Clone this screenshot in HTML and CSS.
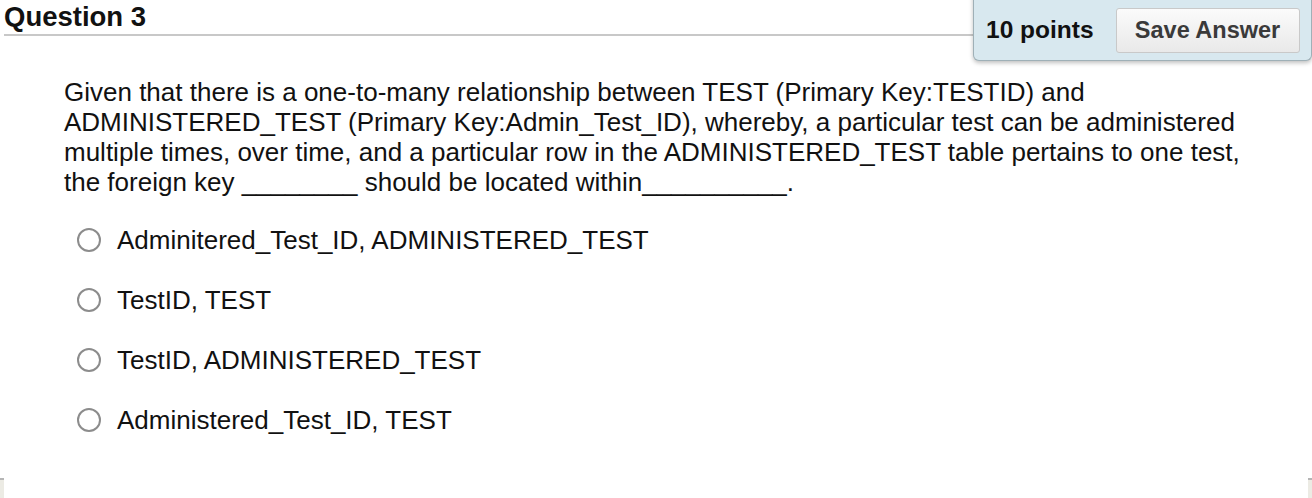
FILE: index.html
```html
<!DOCTYPE html>
<html>
<head>
<meta charset="utf-8">
<link rel="stylesheet" href="styles.css">
</head>
<body>
<div class="page">
  <div class="header">
    <h2 class="title">Question 3</h2>
    <div class="points-box">
      <span class="points">10 points</span>
      <button class="save">Save Answer</button>
    </div>
  </div>
  <div class="question">
    <p class="stem">Given that there is a one-to-many relationship between TEST (Primary Key:TESTID) and<br>ADMINISTERED_TEST (Primary Key:Admin_Test_ID), whereby, a particular test can be administered<br>multiple times, over time, and a particular row in the ADMINISTERED_TEST table pertains to one test,<br>the foreign key ________ should be located within__________.</p>
    <ul class="options">
      <li class="option"><span class="radio"></span><span>Adminitered_Test_ID, ADMINISTERED_TEST</span></li>
      <li class="option"><span class="radio"></span><span>TestID, TEST</span></li>
      <li class="option"><span class="radio"></span><span>TestID, ADMINISTERED_TEST</span></li>
      <li class="option"><span class="radio"></span><span>Administered_Test_ID, TEST</span></li>
    </ul>
  </div>
  <div class="footer">
    <span class="edge left"></span>
    <span class="edge right"></span>
  </div>
</div>
</body>
</html>
```
FILE: styles.css
```css
html, body {
  margin: 0;
  padding: 0;
  background: #fff;
}
body {
  font-family: "Liberation Sans", Arial, sans-serif;
  color: #111;
  width: 1312px;
  height: 498px;
  overflow: hidden;
}
.page {
  position: relative;
  height: 498px;
}
.header {
  display: flex;
  align-items: flex-start;
  padding-left: 4px;
}
.title {
  flex: 1;
  margin: 0;
  font-size: 27.5px;
  font-weight: bold;
  line-height: 34px;
  height: 34px;
  border-bottom: 2px solid #c8c8c8;
  color: #111;
}
.points-box {
  display: flex;
  align-items: center;
  gap: 22px;
  margin-top: -10px;
  height: 71px;
  padding: 10px 10px 0 12px;
  box-sizing: border-box;
  width: 339px;
  background: #d8e8ef;
  border: 1px solid #9fb0b7;
  border-top: none;
  border-radius: 0 0 6px 6px;
  box-shadow: 0 2px 4px rgba(0,0,0,0.25);
}
.points {
  font-size: 24.5px;
  font-weight: bold;
  color: #111;
}
.save {
  font-family: "Liberation Sans", Arial, sans-serif;
  font-size: 23.5px;
  font-weight: bold;
  color: #3a3a3a;
  height: 45px;
  width: 184px;
  border: 1px solid #c9c9c9;
  border-radius: 3px;
  background: linear-gradient(#fbfbfb, #e9e9e9);
  padding: 0;
}
.question {
  padding: 16px 0 0 64px;
}
.stem {
  margin: 0;
  font-size: 26px;
  line-height: 30px;
  color: #111;
  white-space: nowrap;
}
.options {
  list-style: none;
  margin: 13px 0 0 0;
  padding: 0 0 0 13px;
}
.option {
  display: flex;
  align-items: center;
  height: 60px;
  font-size: 26px;
  color: #111;
}
.radio {
  width: 24px;
  height: 24px;
  border: 2px solid #8c8c8c;
  border-radius: 50%;
  box-sizing: border-box;
  margin-right: 16px;
  flex: none;
}
.footer .edge {
  position: absolute;
  bottom: 0;
  width: 4px;
  height: 20px;
  background: linear-gradient(#b5b5b5 0 2px, #ecebe4 2px);
}
.footer .left { left: 0; }
.footer .right { right: 0; }
```
